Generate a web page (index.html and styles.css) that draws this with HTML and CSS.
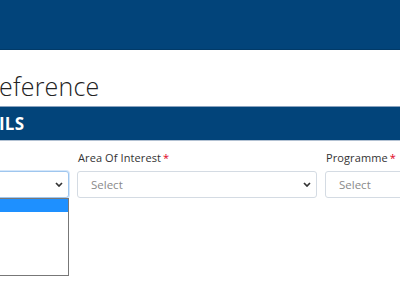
FILE: index.html
```html
<!DOCTYPE html>
<html>
<head>
<meta charset="utf-8">
<link rel="stylesheet" href="styles.css">
</head>
<body>
<header class="topbar"></header>
<div class="title-row"><h1 class="title">Reference</h1></div>
<div class="section-bar"><h2 class="section-title">DETAILS</h2></div>
<div class="form-row">
  <div class="field">
    <label class="label">Category<span class="req">*</span></label>
    <div class="select focused">
      <span class="placeholder"></span>
      <svg class="chev" width="8" height="5" viewBox="0 0 8 5"><path d="M1 1l3 3 3-3" fill="none" stroke="#333" stroke-width="1.7"/></svg>
    </div>
    <div class="dropdown">
      <div class="opt active"></div>
    </div>
  </div>
  <div class="field">
    <label class="label">Area Of Interest<span class="req">*</span></label>
    <div class="select">
      <span class="placeholder">Select</span>
      <svg class="chev" width="8" height="5" viewBox="0 0 8 5"><path d="M1 1l3 3 3-3" fill="none" stroke="#333" stroke-width="1.7"/></svg>
    </div>
  </div>
  <div class="field">
    <label class="label">Programme<span class="req">*</span></label>
    <div class="select">
      <span class="placeholder">Select</span>
      <svg class="chev" width="8" height="5" viewBox="0 0 8 5"><path d="M1 1l3 3 3-3" fill="none" stroke="#333" stroke-width="1.7"/></svg>
    </div>
  </div>
</div>
</body>
</html>
```
FILE: styles.css
```css
html, body {
  margin: 0;
  padding: 0;
  background: #fff;
  overflow: hidden;
}
body {
  font-family: "Open Sans", "DejaVu Sans", sans-serif;
  color: #333;
  width: 400px;
  height: 295px;
}
.topbar {
  height: 49px;
  background: #02447a;
  border-bottom: 1px solid #013a68;
}
.title-row {
  height: 56px;
  display: flex;
  align-items: flex-end;
}
.title {
  margin: 0 0 6px -16px;
  font-weight: 300;
  font-size: 25px;
  line-height: 28px;
  color: #222;
  letter-spacing: 0.2px;
}
.section-bar {
  height: 33px;
  background: #02447a;
  border-top: 1px solid #8aa3bf;
  border-bottom: 1px solid #b3c2d3;
  display: flex;
  align-items: center;
}
.section-title {
  margin: 0 0 0 -46px;
  font-size: 17px;
  font-weight: 700;
  color: #fff;
  letter-spacing: 0.3px;
}
.form-row {
  display: grid;
  grid-template-columns: 240px 240px 240px;
  column-gap: 8px;
  margin-left: -171px;
  padding-top: 10px;
}
.field {
  position: relative;
  display: flex;
  flex-direction: column;
}
.label {
  font-size: 11px;
  line-height: 14px;
  height: 14px;
  margin-left: 1px;
  margin-bottom: 6px;
  color: #333;
  font-weight: 500;
  letter-spacing: 0.1px;
}
.req {
  color: #e0001b;
  margin-left: 2px;
}
.select {
  height: 25px;
  border: 1px solid #d4dbe3;
  border-radius: 3px;
  display: flex;
  align-items: center;
  justify-content: space-between;
  padding: 0 5px 0 13px;
  background: #fff;
}
.select.focused {
  border-color: #9fc6ee;
  box-shadow: 0 0 0 1px #d5e7fa;
}
.placeholder {
  font-size: 11.5px;
  color: #8a8a8a;
}
.chev {
  display: block;
}
.dropdown {
  position: absolute;
  top: 47px;
  left: 0;
  right: 0;
  height: 76px;
  border: 1px solid #777;
  background: #fff;
}
.opt.active {
  height: 13px;
  background: #1e90ff;
}
```
